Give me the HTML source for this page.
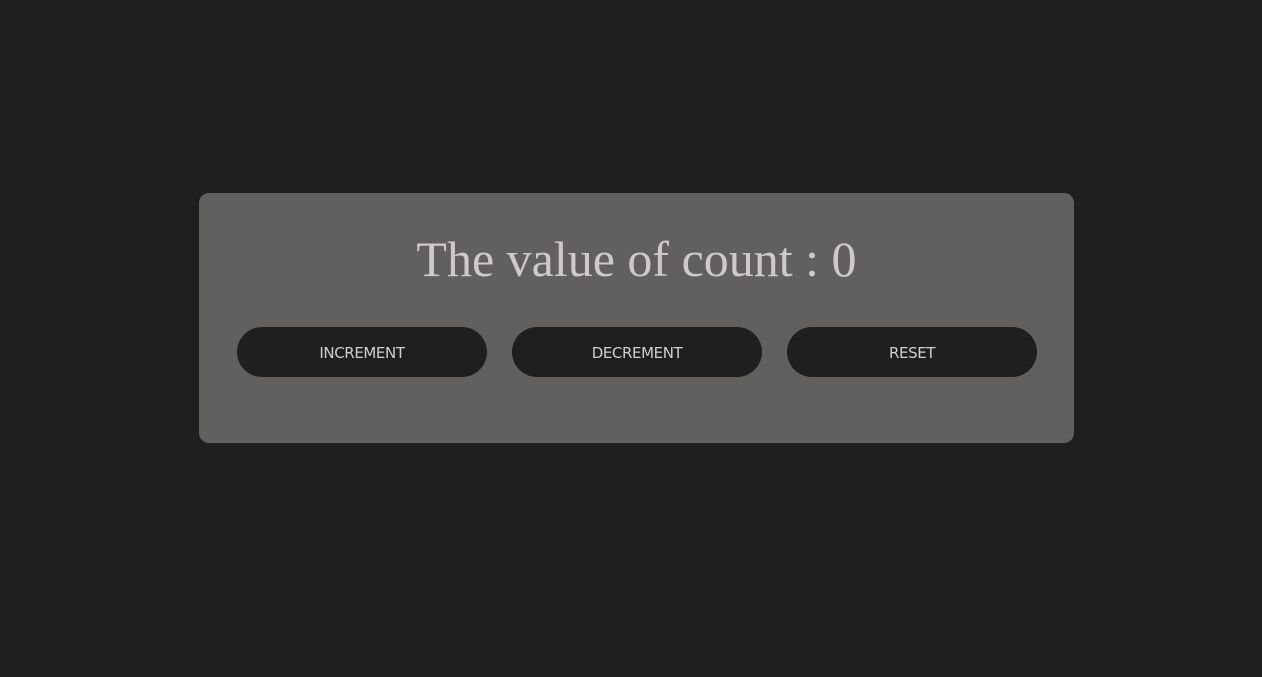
<!DOCTYPE html>
<html><head><style>
html,body{margin:0;padding:0;background:#1f1f1f;width:1262px;height:677px;overflow:hidden}
.card{position:absolute;left:199px;top:193px;width:875px;height:250px;background:#61605f;border-radius:10px}
h1{position:absolute;left:0;right:0;margin:0;text-align:center;font-family:"Liberation Serif",serif;font-weight:normal;font-size:50px;line-height:60px;color:#cfc9c9;top:36px}
.b{position:absolute;top:134px;width:250px;height:50px;border-radius:25px;background:#1f1f1f;color:#cfcfcf;font-family:"DejaVu Sans","Liberation Sans",sans-serif;font-size:15px;line-height:53px;text-align:center;letter-spacing:-0.4px}
</style></head><body>
<div class="card">
<h1>The value of count : 0</h1>
<div class="b" style="left:38px">INCREMENT</div>
<div class="b" style="left:313px">DECREMENT</div>
<div class="b" style="left:588px">RESET</div>
</div>
</body></html>
